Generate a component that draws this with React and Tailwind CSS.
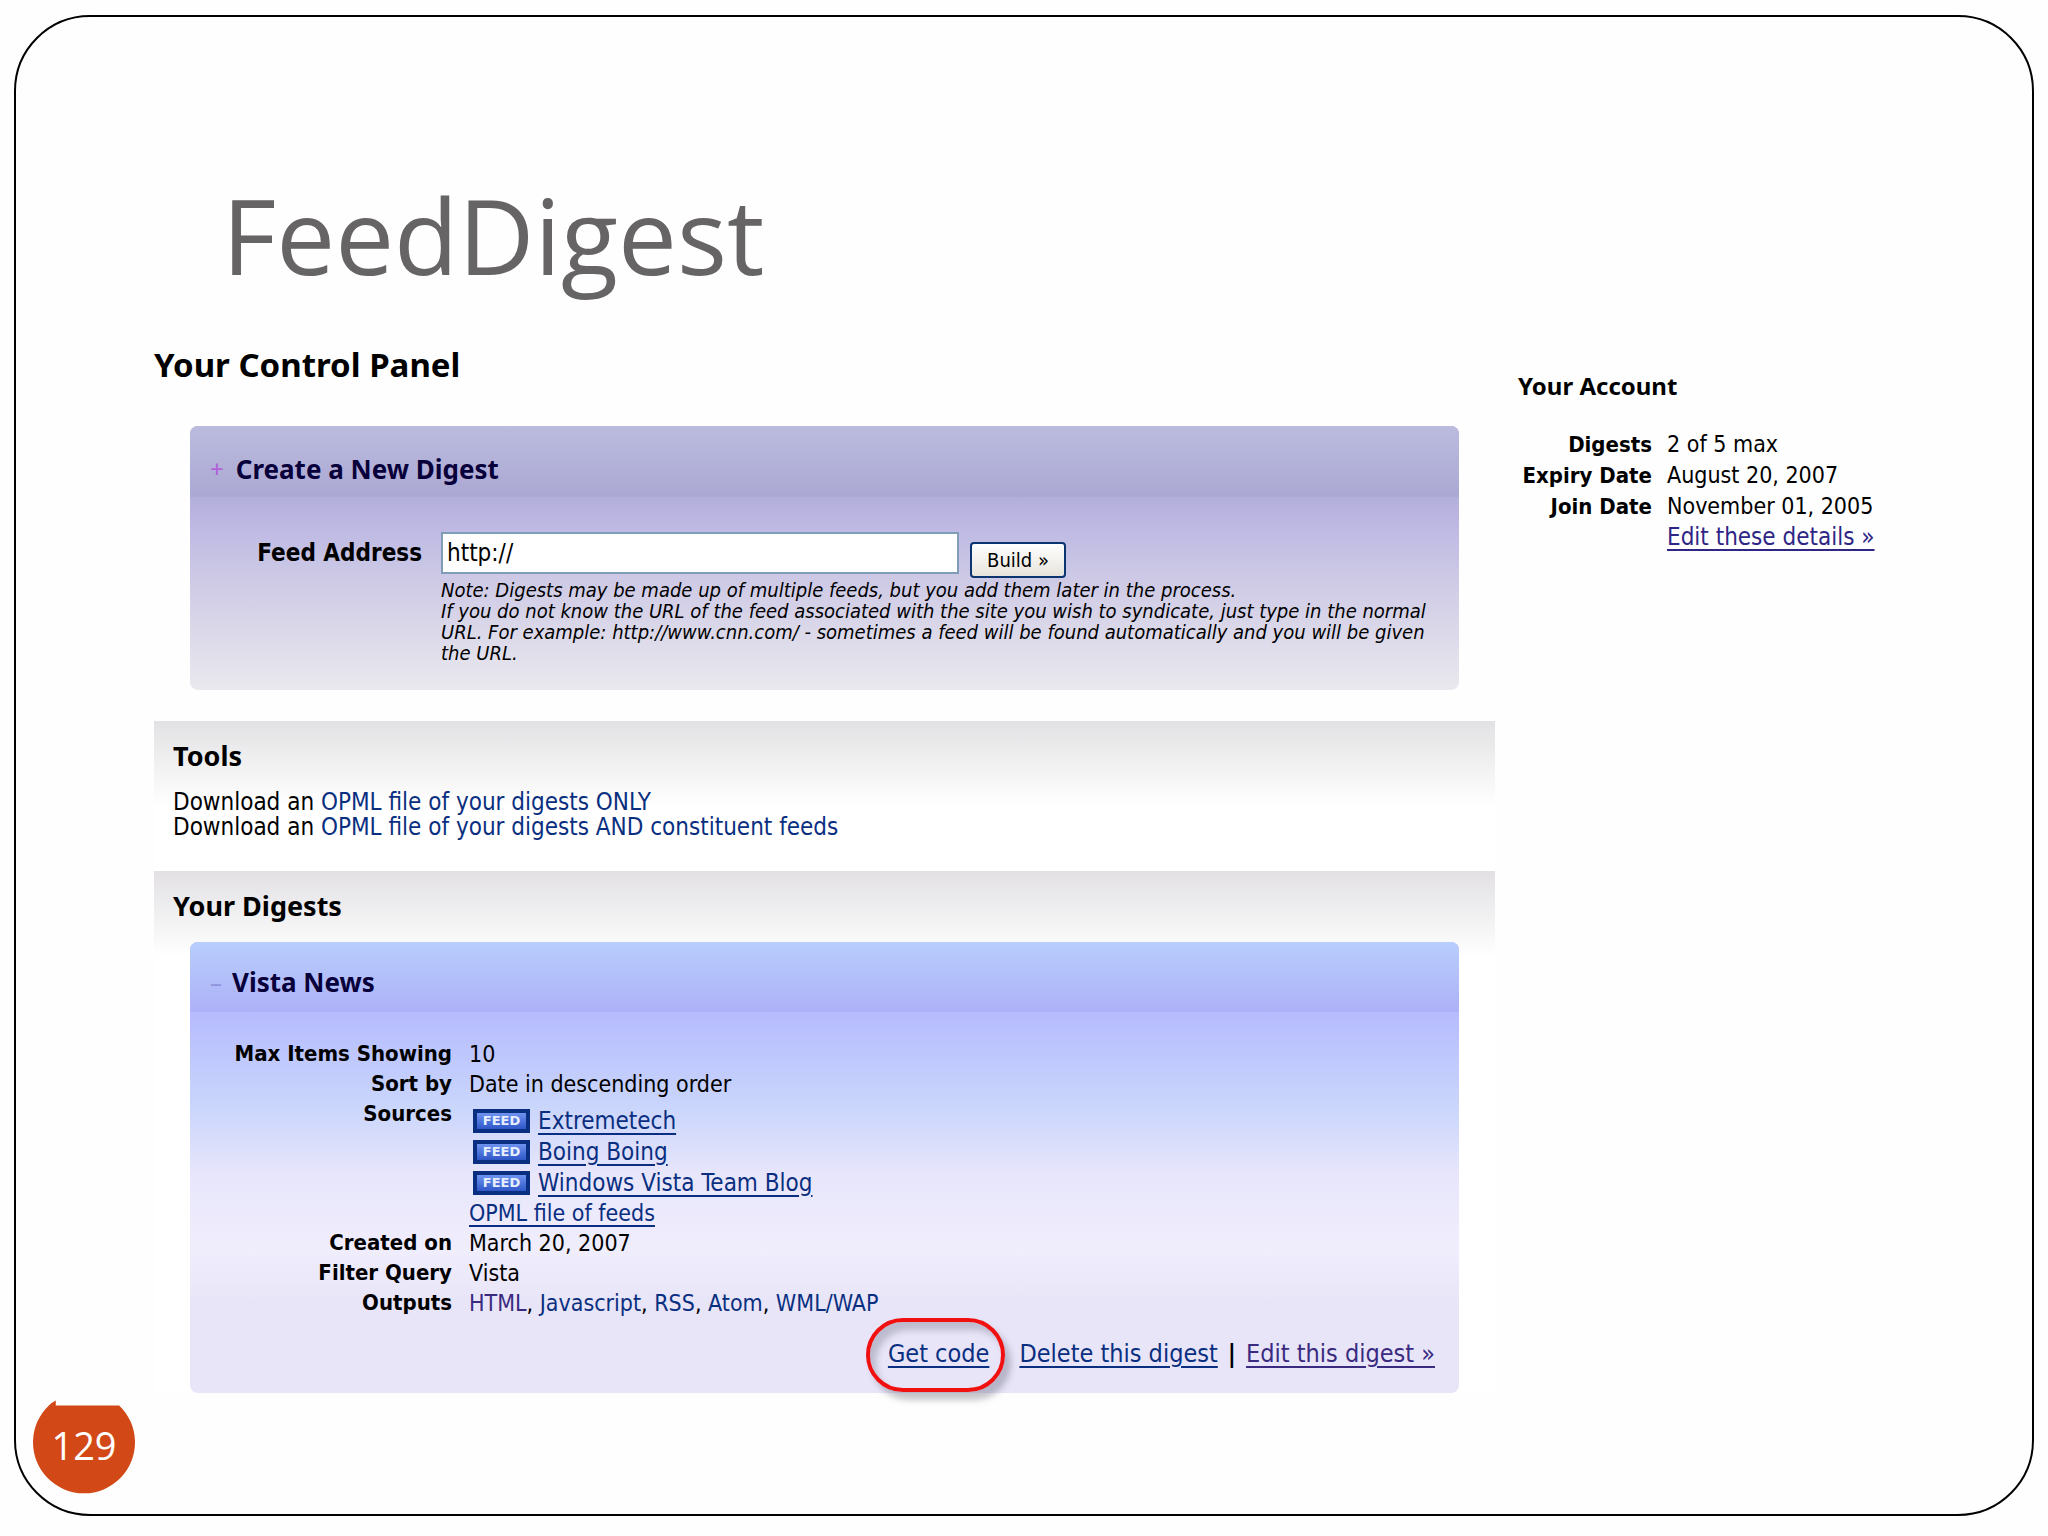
import React from 'react';

const accountRows = [
  { label: 'Digests', value: '2 of 5 max' },
  { label: 'Expiry Date', value: 'August 20, 2007' },
  { label: 'Join Date', value: 'November 01, 2005' },
];

const sources = ['Extremetech', 'Boing Boing', 'Windows Vista Team Blog'];

const outputs = ['HTML', 'Javascript', 'RSS', 'Atom', 'WML/WAP'];

const FeedBadge = () => (
  <span className="flex h-6 w-[57px] items-center justify-center border-4 border-[#0a2f80] bg-linear-to-b from-[#6f93f0] to-[#2f57c8] font-['DejaVu_Sans',sans-serif] text-[13px] leading-none font-bold text-[#e6eeff]">
    FEED
  </span>
);

const SectionTitle = ({ children }) => (
  <h2 className="font-['Noto_Sans',sans-serif] text-[27px] leading-9 font-bold text-black">{children}</h2>
);

const Row = ({ label, children }) => (
  <>
    <dt className="text-right text-[22px] font-bold">{label}</dt>
    <dd className="text-[23px]">{children}</dd>
  </>
);

const CreateDigest = () => (
  <section className="mx-9 rounded-lg bg-[linear-gradient(#b3afdb_27%,#bdb9e3_38%,#cfcbe6_60%,#eae9ee)]">
    <header className="flex h-[71px] items-center gap-3 rounded-t-lg bg-linear-to-b from-[#bbbbde] to-[#aba8d3] px-5 pt-4 pb-[1px]">
      <span className="font-['Noto_Sans',sans-serif] text-[24px] leading-8 text-[#b060d8]">+</span>
      <h2 className="font-['Noto_Sans',sans-serif] text-[26px] leading-8 font-bold text-[#08003a]">Create a New Digest</h2>
    </header>
    <form className="flex gap-[19px] pt-[35px] pr-3 pb-[26px]" onSubmit={(e) => e.preventDefault()}>
      <label htmlFor="feed" className="w-[232px] shrink-0 text-right text-[24px] leading-[42px] font-bold">
        Feed Address
      </label>
      <div className="flex-1">
        <div className="flex items-end gap-[11px]">
          <input
            id="feed"
            type="text"
            defaultValue="http://"
            className="h-[42px] w-[518px] border-2 border-[#7f9db9] bg-white px-1 text-[24px] outline-none"
          />
          <button
            type="submit"
            className="-mb-1 h-9 w-24 rounded-sm border-2 border-[#0a3570] bg-linear-to-b from-white to-[#e6e4dc] text-[20px] leading-8"
          >
            Build »
          </button>
        </div>
        <p className="pt-[6px] text-[20px] leading-[21px] italic">
          Note: Digests may be made up of multiple feeds, but you add them later in the process.
          <br />
          If you do not know the URL of the feed associated with the site you wish to syndicate, just type in the normal
          URL. For example: http://www.cnn.com/ - sometimes a feed will be found automatically and you will be given
          the URL.
        </p>
      </div>
    </form>
  </section>
);

const Tools = () => (
  <section className="mt-[31px] bg-linear-to-b from-[#e2e2e4] to-white to-[85px] px-[19px] pt-[17px] pb-[31px]">
    <SectionTitle>Tools</SectionTitle>
    <div className="mt-4 text-[24px] leading-[25px]">
      <p>
        Download an <a href="#opml" className="text-[#0a2f80]">OPML file of your digests ONLY</a>
      </p>
      <p>
        Download an <a href="#opml-all" className="text-[#0a2f80]">OPML file of your digests AND constituent feeds</a>
      </p>
    </div>
  </section>
);

const VistaDigest = () => (
  <section className="mx-9 rounded-lg bg-[linear-gradient(#b6bcfe_16%,#c9d5fc_36%,#e8e6fb_52%,#f0edfd_68%,#e8e5f8_80%)]">
    <header className="flex h-[70px] items-center gap-[10px] rounded-t-lg bg-linear-to-b from-[#b8cefc] to-[#adb1f7] px-5 pt-[10px]">
      <span className="font-['Noto_Sans',sans-serif] text-[24px] leading-8 text-[#8f93dc]">–</span>
      <h2 className="font-['Noto_Sans',sans-serif] text-[26px] leading-8 font-bold text-[#08003a]">Vista News</h2>
    </header>
    <dl className="grid grid-cols-[262px_1fr] gap-x-[17px] pt-[27px] leading-[30px]">
      <Row label="Max Items Showing">10</Row>
      <Row label="Sort by">Date in descending order</Row>
      <Row label="Sources">
        <ul className="pt-[6px]">
          {sources.map((name) => (
            <li key={name} className="flex h-[31px] items-center gap-2 pl-1">
              <FeedBadge />
              <a href="#source" className="text-[24px] text-[#0a2f80] underline decoration-2 underline-offset-4">{name}</a>
            </li>
          ))}
        </ul>
        <a href="#feeds" className="text-[#0a2f80] underline decoration-2 underline-offset-4">OPML file of feeds</a>
      </Row>
      <Row label="Created on">March 20, 2007</Row>
      <Row label="Filter Query">Vista</Row>
      <Row label="Outputs">
        {outputs.map((name, i) => (
          <React.Fragment key={name}>
            {i > 0 && ', '}
            <a href="#output" className={i === 0 ? 'text-[#3a2a80]' : 'text-[#0a2f80]'}>{name}</a>
          </React.Fragment>
        ))}
      </Row>
    </dl>
    <nav className="flex justify-end px-6 pt-5 pb-[23px] text-[25px] leading-8">
      <a href="#code" className="relative mr-[30px] text-[#0a2f80] underline decoration-2 underline-offset-4">
        Get code
        <span className="absolute -top-5 -right-4 -bottom-[22px] -left-[22px] rounded-[40px] border-4 border-[#f01010] shadow-[6px_8px_6px_rgba(90,90,110,0.35),inset_6px_8px_6px_rgba(90,90,110,0.3)]" />
      </a>
      <a href="#delete" className="text-[#0a2f80] underline decoration-2 underline-offset-4">Delete this digest</a>
      <span className="px-[10px] font-bold">|</span>
      <a href="#edit" className="text-[#3a2a80] underline decoration-2 underline-offset-4">Edit this digest »</a>
    </nav>
  </section>
);

const Account = () => (
  <aside className="w-[514px] shrink-0 pt-[25px]">
    <h2 className="font-['Noto_Sans',sans-serif] text-[24px] leading-8 font-bold">Your Account</h2>
    <dl className="grid grid-cols-[134px_1fr] gap-x-[15px] pt-[27px] leading-[31px]">
      {accountRows.map((row) => (
        <Row key={row.label} label={row.label}>{row.value}</Row>
      ))}
      <dd className="col-start-2 text-[24px]">
        <a href="#account" className="text-[#2e2585] underline decoration-2 underline-offset-4">Edit these details »</a>
      </dd>
    </dl>
  </aside>
);

const PageNumber = () => (
  <div className="absolute bottom-5 left-[17px] flex h-[94px] w-[102px] items-center justify-center pb-1">
    <svg viewBox="0 0 103 94" className="absolute inset-0 h-full w-full" aria-hidden="true">
      <path d="M23 0 V5 H87 A51.5 51.5 0 1 1 16 5 Q19 2 23 0Z" fill="#d34817" />
    </svg>
    <span className="relative font-['Open_Sans',sans-serif] text-[38px] leading-none text-white">129</span>
  </div>
);

export default function App() {
  return (
    <div className="flex min-h-screen bg-[#fefefe] px-[14px] pt-[15px] pb-5 font-['DejaVu_Sans_Condensed','DejaVu_Sans',sans-serif] text-[22px] text-black">
      <div className="relative flex-1 rounded-[76px] border-2 border-black pl-[138px]">
        <h1 className="pt-[153px] pb-[5px] pl-[68px] font-['Open_Sans',sans-serif] text-[105px] leading-[130px] text-[#676466]">
          FeedDigest
        </h1>
        <div className="flex items-start gap-[23px] pt-10">
          <main className="min-w-0 flex-1">
            <h2 className="pb-[41px] font-['Noto_Sans',sans-serif] text-[33px] leading-10 font-bold">Your Control Panel</h2>
            <CreateDigest />
            <Tools />
            <section className="bg-linear-to-b from-[#e2e0e3] to-white to-[85px] pt-[17px]">
              <div className="px-[19px] pb-[18px]">
                <SectionTitle>Your Digests</SectionTitle>
              </div>
              <VistaDigest />
            </section>
          </main>
          <Account />
        </div>
        <PageNumber />
      </div>
    </div>
  );
}
